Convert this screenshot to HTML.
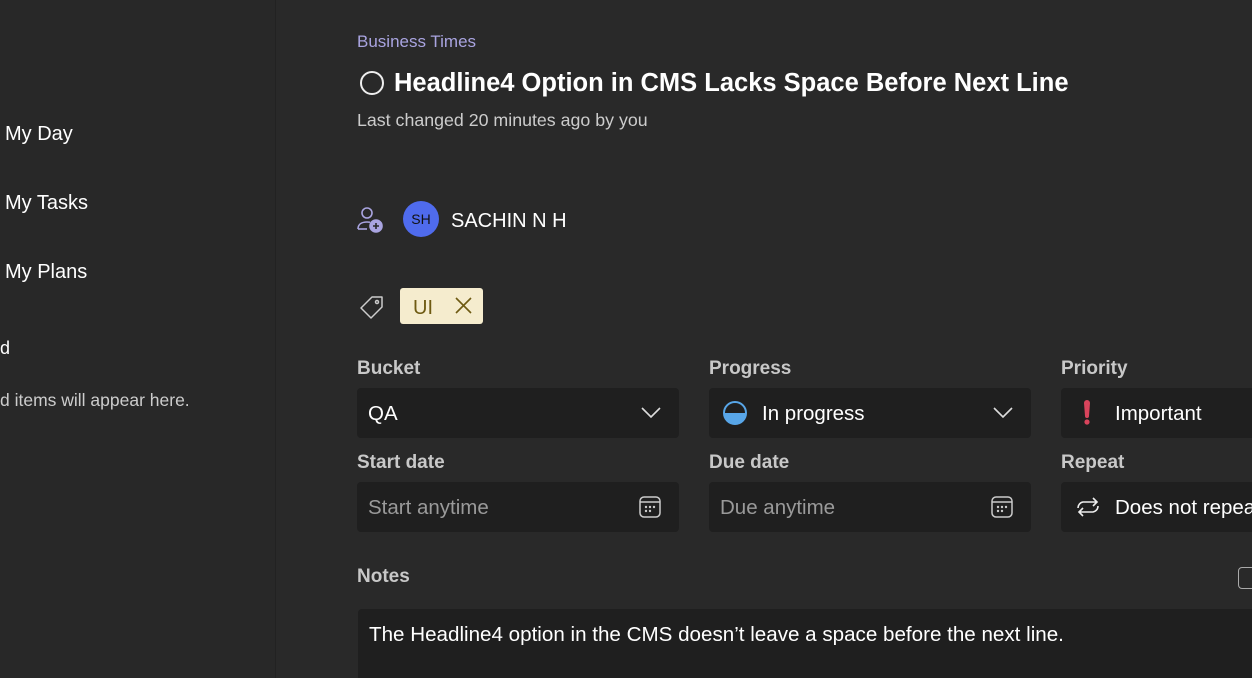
<!DOCTYPE html>
<html><head><meta charset="utf-8"><style>
*{margin:0;padding:0;box-sizing:border-box}
html,body{width:1252px;height:678px;overflow:hidden}
body{background:#292929;font-family:"Liberation Sans",sans-serif;color:#fff;position:relative}
.a{position:absolute;white-space:nowrap}
#side{left:0;top:0;width:276px;height:678px;background:#282828;border-right:1px solid #222}
.nav{font-size:20px;color:#fff;left:5px}
.lbl{font-size:19px;font-weight:bold;color:#c8c8c8}
.fld{background:#1f1f1f;border-radius:4px;height:50px}
.fld span{position:absolute;top:14px;font-size:20.5px}
</style></head><body>
<div class="a" id="side"></div>
<div class="a nav" style="top:123px">My Day</div>
<div class="a nav" style="top:192px">My Tasks</div>
<div class="a nav" style="top:261px">My Plans</div>
<div class="a" style="left:0;top:338px;font-size:18px">d</div>
<div class="a" style="left:0;top:390px;font-size:17.5px;color:#ccc">d items will appear here.</div>

<div class="a" style="left:357px;top:32px;font-size:17px;color:#a9a4e0">Business Times</div>
<div class="a" style="left:360px;top:71px;width:24px;height:24px;border:2px solid #eee;border-radius:50%"></div>
<div class="a" style="left:394px;top:69px;font-size:25.5px;font-weight:bold">Headline4 Option in CMS Lacks Space Before Next Line</div>
<div class="a" style="left:357px;top:110px;font-size:17.8px;color:#ccc">Last changed 20 minutes ago by you</div>

<svg class="a" style="left:356px;top:206px" width="28" height="28" viewBox="0 0 28 28" fill="none" stroke="#a9a4e0" stroke-width="1.6"><circle cx="11" cy="7" r="5"/><path d="M2 23c0-5 4-7 9-7 1 0 2 0 3 .3"/><path d="M2 23h9"/><circle cx="20" cy="20" r="6" fill="#a9a4e0"/><path d="M20 17v6M17 20h6" stroke="#292929"/></svg>
<div class="a" style="left:403px;top:201px;width:36px;height:36px;border-radius:50%;background:#4f6bed;color:#111;font-size:14px;text-align:center;line-height:36px">SH</div>
<div class="a" style="left:451px;top:210px;font-size:20px">SACHIN N H</div>

<svg class="a" style="left:358px;top:293px" width="28" height="28" viewBox="0 0 28 28" fill="none" stroke="#ccc" stroke-width="1.5"><path d="M3 15 L14 4 L24 4 L24 14 L13 25 Z" stroke-linejoin="round"/><circle cx="19" cy="9" r="1.5"/></svg>
<div class="a" style="left:400px;top:288px;width:83px;height:36px;background:#f5ecce;border-radius:3px"></div>
<div class="a" style="left:413px;top:297px;font-size:20px;color:#6e5a12">UI</div>
<svg class="a" style="left:454px;top:296px" width="19" height="19" viewBox="0 0 19 19" stroke="#6e5a12" stroke-width="1.6"><path d="M2 2L17 17M17 2L2 17"/></svg>

<div class="a lbl" style="left:357px;top:358px">Bucket</div>
<div class="a lbl" style="left:709px;top:358px">Progress</div>
<div class="a lbl" style="left:1061px;top:358px">Priority</div>
<div class="a fld" style="left:357px;top:388px;width:322px"><span style="left:11px">QA</span>
<svg class="a" style="left:284px;top:19px" width="20" height="12" viewBox="0 0 20 12" fill="none" stroke="#ddd" stroke-width="1.6"><path d="M1 1l9 9 9-9"/></svg></div>
<div class="a fld" style="left:709px;top:388px;width:322px">
<svg class="a" style="left:14px;top:13px" width="24" height="24" viewBox="0 0 24 24"><circle cx="12" cy="12" r="11" fill="none" stroke="#58a6e8" stroke-width="2"/><path d="M1 12a11 11 0 0 0 22 0z" fill="#58a6e8"/></svg>
<span style="left:53px">In progress</span>
<svg class="a" style="left:284px;top:19px" width="20" height="12" viewBox="0 0 20 12" fill="none" stroke="#ddd" stroke-width="1.6"><path d="M1 1l9 9 9-9"/></svg></div>
<div class="a fld" style="left:1061px;top:388px;width:200px">
<svg class="a" style="left:20px;top:12px" width="12" height="26" viewBox="0 0 12 26"><path d="M3 3a3 3 0 0 1 6 0l-1 13a2 2 0 0 1-4 0z" fill="#d9445c"/><circle cx="6" cy="22" r="2.6" fill="#d9445c"/></svg>
<span style="left:54px">Important</span></div>

<div class="a lbl" style="left:357px;top:452px">Start date</div>
<div class="a lbl" style="left:709px;top:452px">Due date</div>
<div class="a lbl" style="left:1061px;top:452px">Repeat</div>
<div class="a fld" style="left:357px;top:482px;width:322px"><span style="left:11px;color:#9a9a9a">Start anytime</span>
<svg class="a" style="left:282px;top:14px" width="22" height="22" viewBox="0 0 22 22" fill="none" stroke="#ccc" stroke-width="1.5"><rect x="1" y="1" width="20" height="20" rx="4"/><path d="M1 6h20"/><g fill="#ccc" stroke="none"><circle cx="7" cy="11" r="1.2"/><circle cx="11" cy="11" r="1.2"/><circle cx="15" cy="11" r="1.2"/><circle cx="7" cy="15" r="1.2"/><circle cx="11" cy="15" r="1.2"/></g></svg></div>
<div class="a fld" style="left:709px;top:482px;width:322px"><span style="left:11px;color:#9a9a9a">Due anytime</span>
<svg class="a" style="left:282px;top:14px" width="22" height="22" viewBox="0 0 22 22" fill="none" stroke="#ccc" stroke-width="1.5"><rect x="1" y="1" width="20" height="20" rx="4"/><path d="M1 6h20"/><g fill="#ccc" stroke="none"><circle cx="7" cy="11" r="1.2"/><circle cx="11" cy="11" r="1.2"/><circle cx="15" cy="11" r="1.2"/><circle cx="7" cy="15" r="1.2"/><circle cx="11" cy="15" r="1.2"/></g></svg></div>
<div class="a fld" style="left:1061px;top:482px;width:200px">
<svg class="a" style="left:14px;top:14px" width="26" height="22" viewBox="0 0 26 22" fill="none" stroke="#eee" stroke-width="1.6"><path d="M18 2l4 4-4 4M22 6H8a6 6 0 0 0-5 6M8 20l-4-4 4-4M4 16h14a6 6 0 0 0 5-6"/></svg>
<span style="left:54px">Does not repeat</span></div>

<div class="a lbl" style="left:357px;top:566px">Notes</div>
<div class="a" style="left:1238px;top:567px;width:20px;height:22px;border:1.5px solid #aaa;border-radius:4px"></div>
<div class="a" style="left:358px;top:609px;width:900px;height:69px;background:#1f1f1f;border-radius:4px 4px 0 0"></div>
<div class="a" style="left:369px;top:623px;font-size:20.6px">The Headline4 option in the CMS doesn’t leave a space before the next line.</div>
</body></html>
